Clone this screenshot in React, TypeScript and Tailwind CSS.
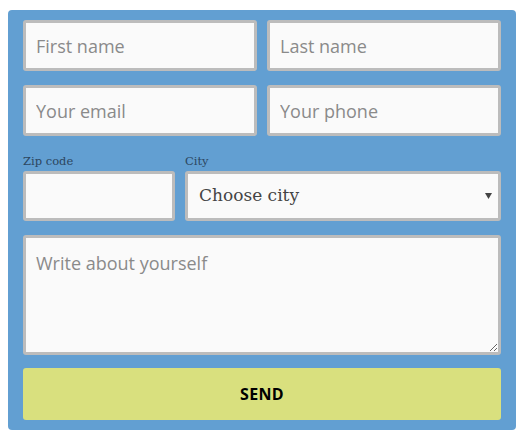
import React from 'react';

const inputCls =
  "w-full h-[51px] px-[10px] bg-[#fafafa] border-[3px] border-[#bcbcbc] rounded-[3px] text-[18px] text-[#444] placeholder:text-[#8a8a8a] outline-none font-['Open_Sans',sans-serif]";

const labelCls =
  "block text-[11.5px] leading-[14px] mb-[3px] text-[#2c4660] font-['DejaVu_Serif',serif]";

export default function App() {
  return (
    <div className="pt-[10px] pl-[8px]">
      <form className="w-[508px] bg-[#629fd2] rounded-[4px] px-[15px] pt-[10px] pb-[10px]">
        <div className="flex gap-[10px]">
          <input type="text" placeholder="First name" className={inputCls} />
          <input type="text" placeholder="Last name" className={inputCls} />
        </div>
        <div className="flex gap-[10px] mt-[14px]">
          <input type="email" placeholder="Your email" className={inputCls} />
          <input type="text" placeholder="Your phone" className={inputCls} />
        </div>

        <div className="flex gap-[10px] mt-[18px]">
          <div className="w-[152px] shrink-0">
            <label className={labelCls}>Zip code</label>
            <input type="text" className={inputCls + " !h-[50px]"} />
          </div>
          <div className="flex-1">
            <label className={labelCls}>City</label>
            <div className="relative">
              <select className="w-full h-[50px] pl-[11px] pr-8 appearance-none bg-[#fafafa] border-[3px] border-[#bcbcbc] rounded-[3px] text-[17px] text-[#444] outline-none font-['DejaVu_Serif',serif]">
                <option>Choose city</option>
              </select>
              <svg className="absolute right-[9px] top-[22px] pointer-events-none" width="7" height="6" viewBox="0 0 7 6">
                <path d="M0 0h7L3.5 6z" fill="#444" />
              </svg>
            </div>
          </div>
        </div>

        <textarea
          placeholder="Write about yourself"
          className="block w-full h-[120px] mt-[14px] px-[10px] py-[12px] bg-[#fafafa] border-[3px] border-[#bcbcbc] rounded-[3px] text-[18px] leading-[26px] text-[#444] placeholder:text-[#8a8a8a] outline-none font-['Open_Sans',sans-serif]"
        />

        <button
          type="button"
          className="block w-full h-[52px] mt-[13px] bg-[#d9e07e] rounded-[3px] text-[16px] font-bold text-black tracking-[0.3px] font-['Open_Sans',sans-serif]"
        >
          SEND
        </button>
      </form>
    </div>
  );
}
